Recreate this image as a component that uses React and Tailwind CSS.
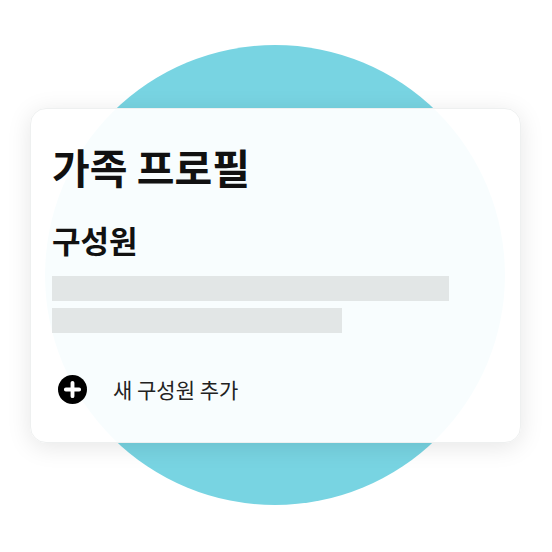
import React from 'react';

const font = { fontFamily: '"Noto Sans CJK KR", "Noto Sans", sans-serif' };

function PlusIcon() {
  return (
    <svg width="29" height="29" viewBox="0 0 24 24">
      <circle cx="12" cy="12" r="12" fill="#000" />
      <path d="M12 6.5v11M6.5 12h11" stroke="#fff" strokeWidth="3.2" strokeLinecap="round" />
    </svg>
  );
}

export default function App() {
  return (
    <div className="relative w-[552px] h-[552px] bg-white overflow-hidden" style={font}>
      <div className="absolute left-[45px] top-[45px] w-[460px] h-[460px] rounded-full bg-[#78d4e2]" />
      <div className="relative pt-[108px] pl-[30px]">
        <div className="w-[491px] h-[335px] rounded-[16px] bg-white/95 border border-[#eef0f0] shadow-[0_4px_24px_rgba(0,0,0,0.1)] pl-[21px] pt-[31px]">
          <h1 className="text-[41px] leading-[52px] font-bold text-[#111]">가족 프로필</h1>
          <h2 className="mt-[28px] text-[31px] leading-[40px] font-bold text-[#111]">구성원</h2>
          <div className="mt-[16px] flex flex-col gap-[7px]">
            <div className="w-[397px] h-[25px] bg-[#e2e6e6]" />
            <div className="w-[290px] h-[25px] bg-[#e2e6e6]" />
          </div>
          <div className="mt-[40px] flex items-center h-[32px]">
            <div className="ml-[6px] flex">
              <PlusIcon />
            </div>
            <span className="ml-[26px] text-[21px] leading-[32px] text-[#222]">새 구성원 추가</span>
          </div>
        </div>
      </div>
    </div>
  );
}
